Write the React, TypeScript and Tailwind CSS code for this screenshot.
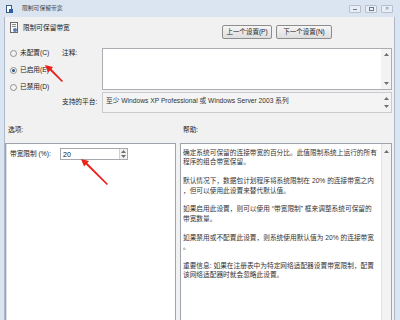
const cjk = { fontFamily: '"Liberation Sans", "Noto Sans CJK SC", sans-serif' };

const helpLines = [
  '确定系统可保留的连接带宽的百分比。此值限制系统上运行的所有',
  '程序的组合带宽保留。',
  '',
  '默认情况下，数据包计划程序将系统限制在 20% 的连接带宽之内',
  '，但可以使用此设置来替代默认值。',
  '',
  '如果启用此设置，则可以使用 “带宽限制” 框来调整系统可保留的',
  '带宽数量。',
  '',
  '如果禁用或不配置此设置，则系统使用默认值为 20% 的连接带宽',
  '。',
  '',
  '重要信息: 如果在注册表中为特定网络适配器设置带宽限制，配置',
  '该网络适配器时就会忽略此设置。',
];

function Arrow({ up }: { up: boolean }) {
  return (
    <svg width="5" height="3" viewBox="0 0 5 3">
      <path d={up ? 'M0 3 L2.5 0 L5 3 Z' : 'M0 0 L2.5 3 L5 0 Z'} fill="#707070" />
    </svg>
  );
}

function ScrollBar({ both = true }: { both?: boolean }) {
  return (
    <div className="flex w-[10px] flex-col items-center justify-between bg-[#f3f3f3] py-[4px]">
      <Arrow up />
      {both && <Arrow up={false} />}
    </div>
  );
}

function Radio({ label, checked }: { label: string; checked?: boolean }) {
  return (
    <div className="flex h-[10px] items-center gap-[3px]">
      <div className="flex h-[7px] w-[7px] items-center justify-center rounded-full border border-[#8e8f8f] bg-[#f4f4f4]">
        {checked && <div className="h-[3px] w-[3px] rounded-full bg-[#2c4f80]" />}
      </div>
      <span className="text-[6.7px] leading-[10px] text-[#222]">{label}</span>
    </div>
  );
}

function Btn({ label, w }: { label: string; w: string }) {
  return (
    <div
      className={`${w} flex h-[14px] items-center justify-center rounded-[2px] border border-[#8d8d8d] bg-gradient-to-b from-[#f6f6f6] to-[#dedede] text-[6.5px] text-[#222]`}
    >
      {label}
    </div>
  );
}

function WinBtn({ children }: { children: React.ReactNode }) {
  return (
    <div className="flex h-[8px] w-[12px] items-center justify-center rounded-[1px] border border-[#b4c0cf] bg-[#e9eef5]">
      {children}
    </div>
  );
}

export default function App() {
  return (
    <div className="relative h-[320px] w-[400px] overflow-hidden bg-[#dbe5f1]" style={cjk}>
      {/* title bar */}
      <div className="flex h-[17px] items-center pl-[6px] pr-[7px]">
        <svg width="7" height="8" viewBox="0 0 7 8">
          <rect x="0.5" y="0.5" width="5" height="7" fill="#fff" stroke="#3a5a8a" />
          <rect x="3" y="4" width="4" height="4" fill="#2d5ea5" />
        </svg>
        <span className="ml-[9px] text-[5.8px] text-[#444]">限制可保留带宽</span>
        <div className="ml-auto flex gap-[4px]">
          <WinBtn>
            <div className="mt-[2px] h-[1px] w-[4px] bg-[#6b7a8e]" />
          </WinBtn>
          <WinBtn>
            <div className="h-[4px] w-[5px] border border-[#6b7a8e]" />
          </WinBtn>
          <WinBtn>
            <span className="text-[5px] leading-none text-[#6b7a8e]">✕</span>
          </WinBtn>
        </div>
      </div>

      {/* client area */}
      <div className="ml-[4px] mr-[5px] flex h-[330px] flex-col border-l border-r border-[#a9b8cb] bg-[#f1f1f1]">
        {/* header */}
        <div className="flex h-[31px] items-start pl-[5px]">
          <svg className="mt-[5px]" width="8" height="11" viewBox="0 0 8 11">
            <rect x="0.5" y="0.5" width="7" height="10" fill="#fafafa" stroke="#6a6a6a" />
            <rect x="2" y="2" width="4" height="1" fill="#888" />
            <rect x="2" y="4" width="4" height="1" fill="#888" />
            <circle cx="5" cy="8" r="2" fill="#5b7fb0" />
          </svg>
          <span className="ml-[5px] mt-[6px] text-[6.7px] leading-[10px] text-[#222]">限制可保留带宽</span>
          <div className="ml-auto mr-[62px] mt-[8px] flex gap-[4px]">
            <Btn label="上一个设置(P)" w="w-[50px]" />
            <Btn label="下一个设置(N)" w="w-[56px]" />
          </div>
        </div>

        {/* state + comment + platform */}
        <div className="flex h-[65px]">
          <div className="flex w-[57px] flex-col gap-[7px] pl-[5px]">
            <Radio label="未配置(C)" />
            <Radio label="已启用(E)" checked />
            <Radio label="已禁用(D)" />
          </div>
          <div className="flex w-[40px] flex-col">
            <span className="text-[6.7px] leading-[10px] text-[#222]">注释:</span>
            <span className="mt-[39px] text-[6.7px] leading-[10px] text-[#222]">支持的平台:</span>
          </div>
          <div className="mr-[2px] flex flex-1 flex-col gap-[2px]">
            <div className="flex h-[42px] border border-[#abadb3] bg-white">
              <div className="flex-1" />
              <ScrollBar />
            </div>
            <div className="flex h-[21px] border border-[#c9cbcf] bg-[#f4f4f4]">
              <div className="flex-1 pl-[3px] pt-[3px] text-[6.7px] leading-[9px] text-[#333]">
                至少 Windows XP Professional 或 Windows Server 2003 系列
              </div>
              <ScrollBar />
            </div>
          </div>
        </div>

        {/* section labels */}
        <div className="mt-[12px] flex h-[10px] text-[6.7px] leading-[10px] text-[#222]">
          <span className="w-[175px] pl-[3px]">选项:</span>
          <span className="pl-[3px]">帮助:</span>
        </div>

        {/* panes */}
        <div className="mr-[2px] mt-[8px] flex flex-1 gap-[4px]">
          <div className="w-[171px] border border-[#9ea4ab] bg-white pl-[4px] pt-[4px] shadow-[inset_1px_0_0_#d9dde2]">
            <div className="flex h-[12px] items-center">
              <span className="w-[50px] text-[6.7px] text-[#222]">带宽限制 (%):</span>
              <div className="flex h-[12px] w-[68px] items-center border border-[#a6a9ae] bg-white">
                <span className="flex-1 pl-[2px] text-[7px] leading-none text-[#111]">20</span>
                <div className="flex h-full w-[8px] flex-col items-center justify-around border-l border-[#d0d0d0] bg-[#f2f2f2]">
                  <Arrow up />
                  <Arrow up={false} />
                </div>
              </div>
            </div>
          </div>
          <div className="flex flex-1 border border-[#9ea4ab] bg-white">
            <div className="flex-1 pl-[2px] pt-[4px] text-[6.7px] leading-[9.4px] text-[#333]">
              {helpLines.map((l, i) => (
                <div key={i} className="h-[9.4px] whitespace-pre">
                  {l}
                </div>
              ))}
            </div>
            <div className="flex w-[10px] flex-col items-center border-l border-[#e2e2e2] bg-[#f3f3f3] pt-[6px]">
              <Arrow up />
            </div>
          </div>
        </div>
      </div>

      {/* red annotation arrows */}
      <svg className="pointer-events-none absolute left-0 top-0" width="400" height="320" viewBox="0 0 400 320">
        <path d="M45 65 L53 67 L51.5 69 L63 81 L61.8 82 L50 70.5 L48 72.5 Z" fill="#e8241c" />
        <path d="M81 159 L89 161 L87.3 163 L108 184 L106.8 185 L85.8 164.5 L84 166.5 Z" fill="#e8241c" />
      </svg>
    </div>
  );
}
